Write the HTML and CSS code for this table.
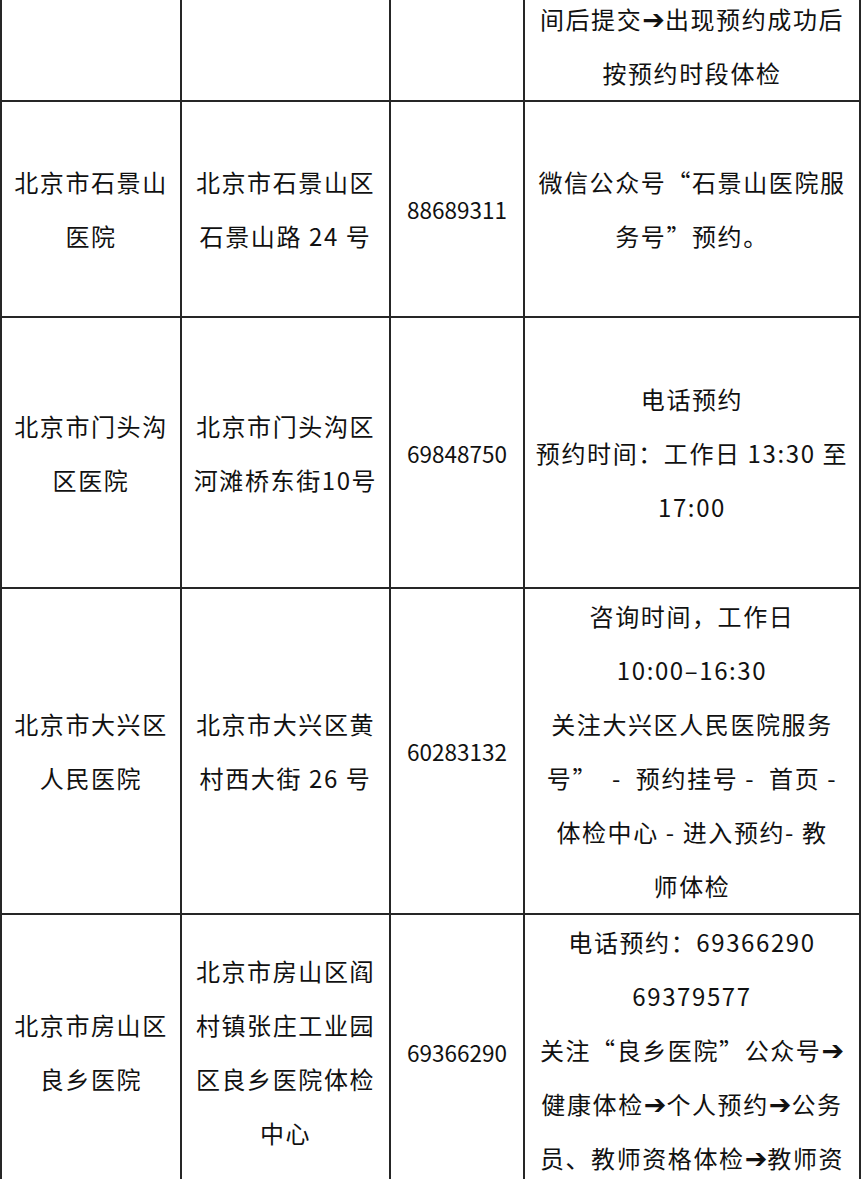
FILE: index.html
```html
<!DOCTYPE html>
<html lang="zh-CN">
<head>
<meta charset="utf-8">
<title>体检医院预约信息</title>
<link rel="stylesheet" href="styles.css">
</head>
<body>
<table class="tbl">
  <colgroup>
    <col class="c-name">
    <col class="c-addr">
    <col class="c-tel">
    <col class="c-way">
  </colgroup>
  <tr class="r-prev">
    <td></td>
    <td></td>
    <td></td>
    <td class="way">间后提交<span class="arr">➔</span>出现预约成功后<br>按预约时段体检</td>
  </tr>
  <tr class="r-sjs">
    <td>北京市石景山<br>医院</td>
    <td>北京市石景山区<br>石景山路 24 号</td>
    <td class="tel">88689311</td>
    <td class="way">微信公众号“石景山医院服<br>务号”预约。</td>
  </tr>
  <tr class="r-mtg">
    <td>北京市门头沟<br>区医院</td>
    <td>北京市门头沟区<br>河滩桥东街10号</td>
    <td class="tel">69848750</td>
    <td class="way">电话预约<br>预约时间：工作日 13:30 至<br>17:00</td>
  </tr>
  <tr class="r-dx">
    <td>北京市大兴区<br>人民医院</td>
    <td>北京市大兴区黄<br>村西大街 26 号</td>
    <td class="tel">60283132</td>
    <td class="way">咨询时间，工作日<br>10:00–16:30<br>关注大兴区人民医院服务<br>号”&nbsp; - &nbsp;预约挂号 - &nbsp;首页 -<br>体检中心 - 进入预约- 教<br>师体检</td>
  </tr>
  <tr class="r-fs">
    <td class="split"><div class="mid">北京市房山区<br>良乡医院</div></td>
    <td class="split"><div class="mid">北京市房山区阎<br>村镇张庄工业园<br>区良乡医院体检<br>中心</div></td>
    <td class="split tel"><div class="mid">69366290</div></td>
    <td class="way top">电话预约：69366290<br>69379577<br>关注“良乡医院”公众号<span class="arr">➔</span><br>健康体检<span class="arr">➔</span>个人预约<span class="arr">➔</span>公务<br>员、教师资格体检<span class="arr">➔</span>教师资<br>格体检<span class="arr">➔</span>选择体检时间后提<br>交<span class="arr">➔</span>按预约时段体检</td>
  </tr>
</table>
</body>
</html>
```

FILE: styles.css
```css
html, body {
  margin: 0;
  padding: 0;
  background: #ffffff;
  overflow: hidden;
}

body {
  width: 864px;
  height: 1179px;
  font-family: "Noto Sans CJK SC", "Noto Sans", sans-serif;
  color: #111111;
}

.tbl {
  border-collapse: collapse;
  table-layout: fixed;
  width: 859px;
  margin: -10px 0 0 0;
  font-size: 24px;
  line-height: 54px;
  letter-spacing: 1.6px;
}

.c-name { width: 180px; }
.c-addr { width: 209px; }
.c-tel { width: 134px; }
.c-way { width: 336px; }

.tbl td {
  border: 2px solid #262626;
  padding: 0;
  text-align: center;
  vertical-align: middle;
}

.tbl td.tel {
  font-size: 22.5px;
  letter-spacing: 0;
}

.arr {
  font-family: "DejaVu Sans", sans-serif;
  font-size: 27px;
  line-height: 0;
  letter-spacing: 0;
}

.r-prev td { height: 108px; }
.r-sjs td { height: 214px; }
.r-mtg td { height: 269px; }
.r-dx td { height: 324px; }

.tbl td.split,
.tbl td.top {
  vertical-align: top;
}

.mid {
  height: 274px;
  display: flex;
  align-items: center;
  justify-content: center;
}
```
